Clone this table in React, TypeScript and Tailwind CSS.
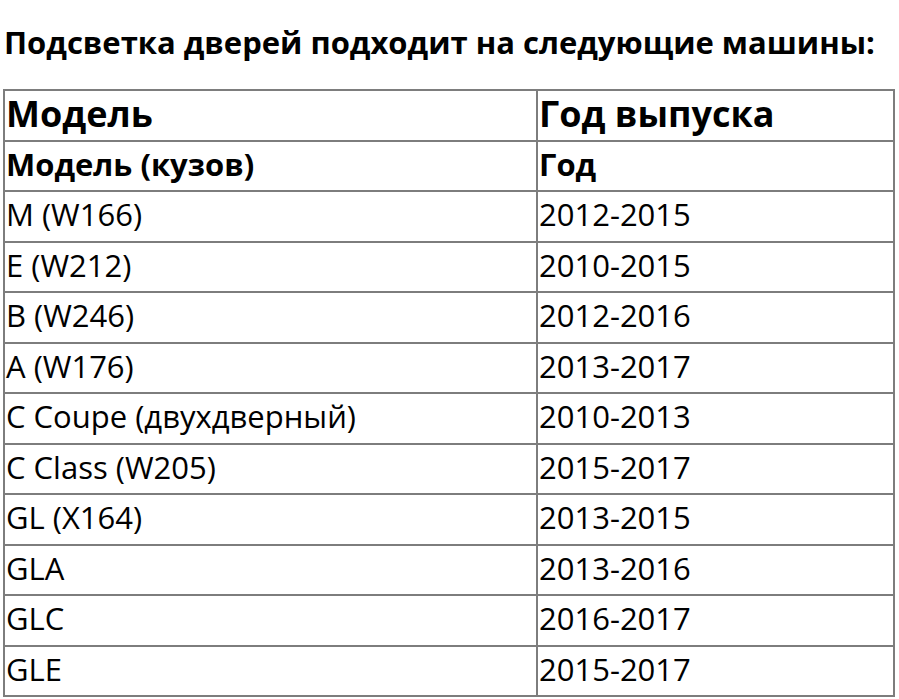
const rows: [string, string][] = [
  ['M (W166)', '2012-2015'],
  ['E (W212)', '2010-2015'],
  ['B (W246)', '2012-2016'],
  ['A (W176)', '2013-2017'],
  ['C Coupe (двухдверный)', '2010-2013'],
  ['C Class (W205)', '2015-2017'],
  ['GL (X164)', '2013-2015'],
  ['GLA', '2013-2016'],
  ['GLC', '2016-2017'],
  ['GLE', '2015-2017'],
];

export default function App() {
  return (
    <div className="w-[899px] h-[699px] overflow-hidden bg-white text-black font-['Open_Sans',sans-serif]">
      <h2 className="pt-[21px] pl-[4px] text-[31px] leading-[1.362] font-bold whitespace-nowrap">
        Подсветка дверей подходит на следующие машины:
      </h2>
      <table className="mt-[26px] ml-[3px] w-[892px] border-collapse border-2 border-[#7d7d7d]">
        <colgroup>
          <col className="w-[533px]" />
          <col />
        </colgroup>
        <thead>
          <tr className="h-[50.5px]">
            <th className="border-2 border-[#7d7d7d] pl-[1px] pb-[2px] text-left text-[36px] font-bold leading-none">Модель</th>
            <th className="border-2 border-[#7d7d7d] pl-[1px] pb-[2px] text-left text-[36px] font-bold leading-none">Год выпуска</th>
          </tr>
          <tr className="h-[50.5px]">
            <th className="border-2 border-[#7d7d7d] pl-[1px] pb-[2px] text-left text-[31px] font-bold leading-none">Модель (кузов)</th>
            <th className="border-2 border-[#7d7d7d] pl-[1px] pb-[2px] text-left text-[31px] font-bold leading-none">Год</th>
          </tr>
        </thead>
        <tbody>
          {rows.map(([model, year]) => (
            <tr key={model} className="h-[50.5px]">
              <td className="border-2 border-[#7d7d7d] pl-[1px] pb-[3px] text-[31px] leading-none">{model}</td>
              <td className="border-2 border-[#7d7d7d] pl-[1px] pb-[3px] text-[31px] leading-none">{year}</td>
            </tr>
          ))}
        </tbody>
      </table>
    </div>
  );
}
